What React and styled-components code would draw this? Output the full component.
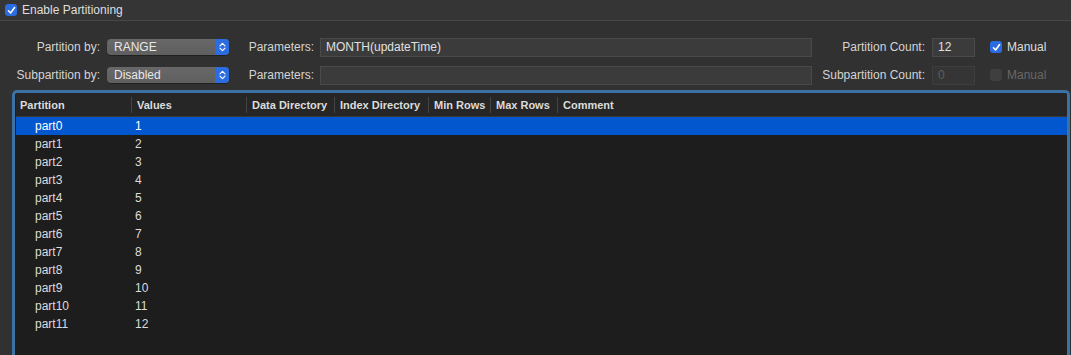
import React from 'react';
import styled, { createGlobalStyle } from 'styled-components';

const GlobalStyle = createGlobalStyle`
  html, body {
    margin: 0;
    padding: 0;
    height: 355px;
    overflow: hidden;
    background: #313131;
  }
  body {
    font-family: "Liberation Sans", Arial, sans-serif;
    color: #dedede;
  }
`;

const Page = styled.div`
  display: flex;
  flex-direction: column;
  height: 355px;
`;

const TopBar = styled.div`
  flex: none;
  height: 20px;
  display: flex;
  align-items: center;
  padding-left: 5px;
  background: #353535;
  border-bottom: 1px solid #464646;
  font-size: 12px;
`;

const CheckLabel = styled.label`
  display: flex;
  align-items: center;
  gap: 5px;
  font-size: 12px;
  color: ${p => (p.$disabled ? '#686868' : '#dedede')};
`;

const Box = styled.span`
  width: 12px;
  height: 12px;
  border-radius: 3px;
  display: flex;
  align-items: center;
  justify-content: center;
  background: ${p => (p.$checked ? '#2b6ce0' : '#4a4a4a')};
  opacity: ${p => (p.$disabled ? 0.55 : 1)};
  flex: none;
`;

function CheckBox({ checked, disabled, children }) {
  return (
    <CheckLabel $disabled={disabled}>
      <Box $checked={checked} $disabled={disabled}>
        {checked && (
          <svg width="9" height="9" viewBox="0 0 9 9">
            <path d="M1.5 4.8 L3.6 7 L7.6 1.6" stroke="#fff" strokeWidth="1.6" fill="none" strokeLinecap="round" strokeLinejoin="round" />
          </svg>
        )}
      </Box>
      {children}
    </CheckLabel>
  );
}

const Form = styled.div`
  flex: none;
  display: grid;
  grid-template-columns: 107px 122px 91px 492px 120px 43px auto;
  grid-auto-rows: 20px;
  row-gap: 8px;
  align-items: center;
  margin-top: 16px;
`;

const Label = styled.div`
  text-align: right;
  padding-right: ${p => p.$pad || 7}px;
  font-size: 12px;
  white-space: nowrap;
  color: #d4d4d4;
`;

const Popup = styled.div`
  height: 16px;
  display: flex;
  align-items: center;
  border-radius: 4px;
  background: linear-gradient(#686868, #5f5f5f);
  box-shadow: 0 1px 1px rgba(0, 0, 0, 0.35);
  font-size: 12px;
  color: #e8e8e8;
  overflow: hidden;
`;

const PopupText = styled.span`
  flex: 1;
  padding-left: 7px;
`;

const Stepper = styled.span`
  width: 14px;
  height: 100%;
  background: #2b6ce0;
  display: flex;
  align-items: center;
  justify-content: center;
`;

function PopupButton({ value }) {
  return (
    <Popup>
      <PopupText>{value}</PopupText>
      <Stepper>
        <svg width="7" height="10" viewBox="0 0 7 10">
          <path d="M1 3.8 L3.5 1.3 L6 3.8 M1 6.2 L3.5 8.7 L6 6.2" stroke="#fff" strokeWidth="1.2" fill="none" strokeLinecap="round" strokeLinejoin="round" />
        </svg>
      </Stepper>
    </Popup>
  );
}

const Field = styled.div`
  height: 19px;
  box-sizing: border-box;
  border: 1px solid ${p => (p.$disabled ? '#3e3e3e' : '#4a4a4a')};
  background: ${p => (p.$disabled ? '#353535' : '#3b3b3b')};
  font-size: 12px;
  line-height: 17px;
  padding-left: 5px;
  color: ${p => (p.$disabled ? '#5e5e5e' : '#e0e0e0')};
`;

const ManualCell = styled.div`
  padding-left: 15px;
`;

const TableFrame = styled.div`
  margin: 5px 1px 0 12px;
  flex: 1;
  min-height: 0;
  border: 3px solid #3b71a3;
  border-bottom: none;
  border-radius: 5px 5px 0 0;
  background: #1d1d1d;
  display: flex;
  flex-direction: column;
  overflow: hidden;
`;

const cols = [115, 115, 88, 94, 62, 67, 'auto'];
const gridCols = cols.map(c => (c === 'auto' ? '1fr' : c + 'px')).join(' ');

const HeaderRow = styled.div`
  flex: none;
  display: grid;
  grid-template-columns: ${gridCols};
  height: 23px;
  align-items: center;
  background: #262626;
  border-bottom: 1px solid #3a3a3a;
  margin-left: 1px;
`;

const HeaderCell = styled.div`
  height: 16px;
  line-height: 16px;
  padding-left: ${p => (p.$first ? 4 : 5)}px;
  border-left: ${p => (p.$first ? 'none' : '1px solid #454545')};
  font-size: 11px;
  font-weight: bold;
  color: #dcdcdc;
  white-space: nowrap;
  overflow: hidden;
`;

const Row = styled.div`
  flex: none;
  display: grid;
  grid-template-columns: ${gridCols};
  height: 18px;
  align-items: center;
  margin-left: 1px;
  background: ${p => (p.$selected ? '#0257cf' : 'transparent')};
  color: ${p => (p.$selected ? '#ffffff' : '#dcdcdc')};
  font-size: 12px;
`;

const Cell = styled.div`
  padding-left: ${p => p.$indent || 4}px;
  white-space: nowrap;
`;

const headers = ['Partition', 'Values', 'Data Directory', 'Index Directory', 'Min Rows', 'Max Rows', 'Comment'];
const parts = Array.from({ length: 12 }, (_, i) => ({ name: 'part' + i, value: String(i + 1) }));

export default function App() {
  return (
    <Page>
      <GlobalStyle />
      <TopBar>
        <CheckBox checked>Enable Partitioning</CheckBox>
      </TopBar>
      <Form>
        <Label>Partition by:</Label>
        <PopupButton value="RANGE" />
        <Label $pad={6}>Parameters:</Label>
        <Field>MONTH(updateTime)</Field>
        <Label>Partition Count:</Label>
        <Field>12</Field>
        <ManualCell>
          <CheckBox checked>Manual</CheckBox>
        </ManualCell>

        <Label>Subpartition by:</Label>
        <PopupButton value="Disabled" />
        <Label $pad={6}>Parameters:</Label>
        <Field />
        <Label>Subpartition Count:</Label>
        <Field $disabled>0</Field>
        <ManualCell>
          <CheckBox disabled>Manual</CheckBox>
        </ManualCell>
      </Form>
      <TableFrame>
        <HeaderRow>
          {headers.map((h, i) => (
            <HeaderCell key={h} $first={i === 0}>{h}</HeaderCell>
          ))}
        </HeaderRow>
        {parts.map((p, i) => (
          <Row key={p.name} $selected={i === 0}>
            <Cell $indent={19}>{p.name}</Cell>
            <Cell>{p.value}</Cell>
          </Row>
        ))}
      </TableFrame>
    </Page>
  );
}
